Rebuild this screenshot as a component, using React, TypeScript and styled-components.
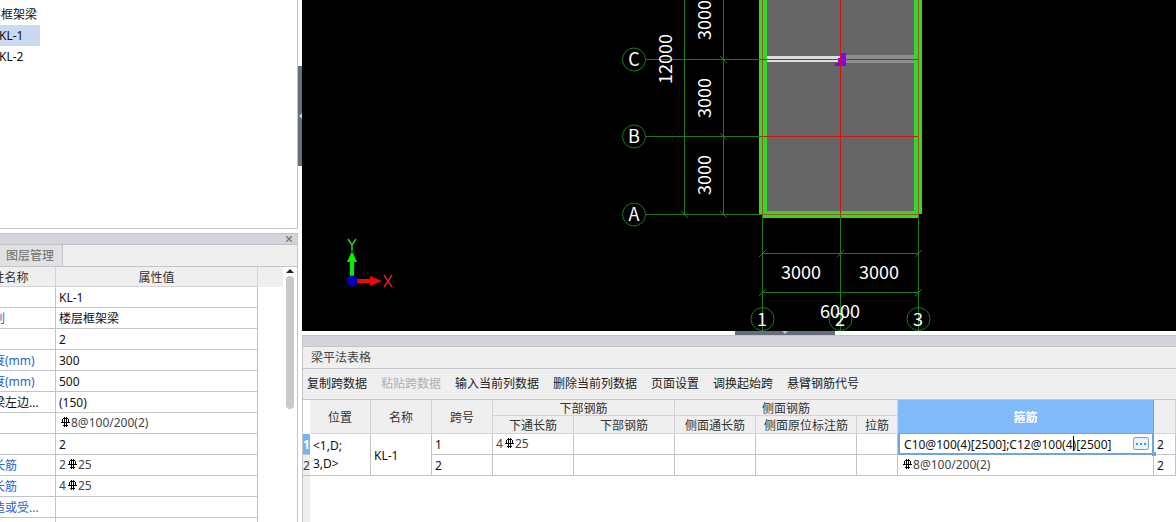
import React from "react";
import styled, { createGlobalStyle } from "styled-components";

const line = "#c3c4c8";

const GlobalStyle = createGlobalStyle`
  *, *::before, *::after { box-sizing: border-box; }
  body {
    margin: 0;
    background: #fff;
    color: #111;
    font: 12px/20px "Noto Sans", "Noto Sans CJK SC", sans-serif;
    overflow: hidden;
  }
  button, input { font: inherit; color: inherit; }
`;

const Page = styled.div`
  display: flex;
  height: 100vh;
  overflow: hidden;
`;

const Sidebar = styled.aside`
  flex: none;
  width: 298px;
  display: flex;
  flex-direction: column;
  gap: 4px;
`;

const TreePanel = styled.section`
  flex: none;
  height: 229px;
  padding-top: 4px;
  border: solid ${line};
  border-width: 0 1px 1px 0;
  overflow: hidden;
`;

const TreeList = styled.ul`
  list-style: none;
  margin: 0 0 0 -12px;
  padding: 0;
  display: flex;
  flex-direction: column;
  align-items: flex-start;
`;

const TreeItem = styled.li<{ $selected?: boolean }>`
  height: 21px;
  line-height: 21px;
  padding-left: ${(p) => (p.$selected === undefined ? 1 : 11)}px;
  padding-right: ${(p) => (p.$selected === undefined ? 0 : 17)}px;
  background: ${(p) => (p.$selected ? "#c9daf0" : "none")};
`;

const PropertyPanel = styled.section`
  flex: 1;
  min-height: 0;
  display: flex;
  flex-direction: column;
  border: solid ${line};
  border-width: 1px 1px 0 0;
  overflow: hidden;
`;

const TitleBar = styled.div`
  flex: none;
  height: 11px;
  display: flex;
  justify-content: flex-end;
  align-items: center;
  padding-right: 5px;
  background: #d4d5da;
  border-bottom: 1px solid ${line};
`;

const CloseButton = styled.button`
  display: flex;
  padding: 0;
  border: 0;
  background: none;
`;

const TabStrip = styled.div`
  flex: none;
  height: 22px;
  display: flex;
  background: #efefef;
  border-bottom: 1px solid ${line};
`;

const Tab = styled.button`
  padding: 1px 8px 0 6px;
  border: 0;
  border-right: 1px solid ${line};
  background: #e1e1e2;
  color: #6c6c6c;
  line-height: 20px;
`;

const PropertyBody = styled.div`
  flex: 1;
  min-height: 0;
  display: flex;
  overflow: hidden;
`;

const PropertyScroller = styled.div`
  flex: 1;
  min-width: 0;
  overflow: hidden;
`;

const PropertyTable = styled.table`
  width: calc(100% + 46px);
  margin-left: -46px;
  table-layout: fixed;
  border-collapse: separate;
  border-spacing: 0;

  th, td {
    height: 21px;
    padding: 2px 3px 0;
    line-height: 18px;
    font-weight: normal;
    text-align: left;
    white-space: nowrap;
    border: solid ${line};
    border-width: 0 1px 1px 0;
  }
  thead th {
    height: 20px;
    line-height: 17px;
    text-align: center;
    color: #333;
    background: #efefef;
    border-color: #d2d3d5;
  }
  th:last-child, td:last-child { border: 0; }
`;

const PropertyName = styled.th<{ $link?: boolean }>`
  color: ${(p) => (p.$link ? "#2b5fd0" : "#111")};
`;

const ScrollTrack = styled.div`
  flex: none;
  width: 14px;
  display: flex;
  flex-direction: column;
  align-items: center;
  gap: 3px;
  padding-top: 2px;
`;

const ScrollThumb = styled.div`
  width: 8px;
  height: 133px;
  border-radius: 4px;
  background: #c9c9c9;
`;

const VerticalSplitter = styled.div`
  flex: none;
  width: 4px;
  padding-top: 66px;
`;

const HorizontalSplitter = styled.div`
  flex: none;
  height: 4px;
  display: flex;
  justify-content: center;
  padding-left: 92px;
`;

const Grip = styled.button<{ $vertical?: boolean }>`
  width: ${(p) => (p.$vertical ? 4 : 100)}px;
  height: ${(p) => (p.$vertical ? 100 : 4)}px;
  display: flex;
  align-items: center;
  justify-content: center;
  padding: 0;
  border: 0;
  background: #656e79;
`;

const Main = styled.main`
  flex: 1;
  min-width: 0;
  display: flex;
  flex-direction: column;
`;

const Canvas = styled.div`
  flex: none;
  background: #000;
  overflow: hidden;

  svg { display: block; }
`;

const SheetPanel = styled.section`
  flex: 1;
  min-height: 0;
  display: flex;
  flex-direction: column;
  border: solid ${line};
  border-width: 1px 0 0 1px;
`;

const SheetTitle = styled.h2`
  flex: none;
  height: 22px;
  margin: 0;
  padding: 1px 0 0 8px;
  font-size: 12px;
  line-height: 20px;
  font-weight: normal;
  color: #444;
  background: #efefef;
  border-bottom: 1px solid ${line};
`;

const Toolbar = styled.div`
  flex: none;
  height: 31px;
  display: flex;
  gap: 14px;
  padding-left: 4px;
  background: #efefef;
  border-bottom: 1px solid ${line};
`;

const ToolButton = styled.button`
  padding: 0;
  border: 0;
  background: none;
  color: #222;
  line-height: 30px;
  white-space: nowrap;

  &:disabled { color: #b0b0b0; }
`;

const SheetArea = styled.div`
  flex: 1;
  min-height: 0;
  background: linear-gradient(to right, #efefef 7px, #fff 7px);
`;

const SheetTable = styled.table`
  width: 100%;
  table-layout: fixed;
  border-collapse: separate;
  border-spacing: 0;

  th, td {
    padding: 2px 3px 0;
    font-weight: normal;
    text-align: left;
    white-space: nowrap;
    border: solid ${line};
    border-width: 0 1px 1px 0;
  }
  td { height: 21px; line-height: 18px; background: #fff; }
`;

const HeadCell = styled.th<{ $active?: boolean }>`
  && {
    height: 16px;
    padding: 2px 0 0;
    line-height: 13px;
    text-align: center;
    color: ${(p) => (p.$active ? "#fff" : "#333")};
    font-weight: ${(p) => (p.$active ? "bold" : "normal")};
    background: ${(p) => (p.$active ? "#80bafb" : "#efefef")};
    border-color: ${(p) => (p.$active ? "#6fa5dc" : "#d2d3d5")};
  }
`;

const SubHeadRow = styled.tr`
  && th { height: 18px; line-height: 15px; }
`;

const CornerCell = styled.td`
  && { padding: 0; border: 0; }
`;

const RowNumber = styled.th<{ $active?: boolean }>`
  && {
    padding: 2px 0 0;
    overflow: hidden;
    line-height: 18px;
    color: ${(p) => (p.$active ? "#fff" : "#333")};
    font-weight: ${(p) => (p.$active ? "bold" : "normal")};
    background: ${(p) => (p.$active ? "#77b2f3" : "#efefef")};
    border-right: 0;
  }
`;

const LocationCell = styled.td`
  && { padding-top: 1px; white-space: pre; }
`;

const EditCell = styled.td`
  && {
    position: relative;
    padding: 0;
    border: 2px solid #6fa5dc;
    border-top: 0;
  }
`;

const EditBox = styled.div`
  display: flex;
  align-items: center;
  gap: 4px;
  height: 19px;
  padding: 0 3px 0 4px;
`;

const EditInput = styled.input`
  flex: 1;
  min-width: 0;
  height: 19px;
  padding: 1px 0 0;
  border: 0;
  outline: 0;
  background: none;
`;

const MoreButton = styled.button`
  flex: none;
  width: 16px;
  height: 13px;
  display: flex;
  align-items: center;
  justify-content: center;
  padding: 0;
  border: 1px solid #6fa5dc;
  border-radius: 2px;
  background: #eaf3fc;
`;

const Caret = styled.span`
  position: absolute;
  left: 173px;
  top: 2px;
  width: 1px;
  height: 15px;
  background: #000;
`;

const FillHandle = styled.span`
  position: absolute;
  right: -4px;
  bottom: -3px;
  z-index: 1;
  width: 4px;
  height: 4px;
  background: #6fa5dc;
`;

const RebarValue = styled.span`
  display: flex;
  align-items: center;
  height: 18px;
  line-height: 18px;
  padding-bottom: 2px;
  color: #444;

  svg { flex: none; margin: 0 1px 0 2px; }
`;

/* Hot-rolled ribbed bar symbol drawn before the bar diameter */
const RebarMark = () => (
  <svg width="9" height="14" viewBox="0 0 9 14" fill="none" stroke="#000" shapeRendering="crispEdges">
    <path d="M3.5 1v10M5.5 1v10M2 2.5h5M1.5 3v4M7.5 3v4M0 6.5h9M2 9.5h5" />
  </svg>
);

const Rebar = ({ count, size }: { count?: string; size: string }) => (
  <RebarValue>
    {count}
    <RebarMark />
    {size}
  </RebarValue>
);

type Property = { name: string; link?: boolean; value: React.ReactNode };

const properties: Property[] = [
  { name: "名称", value: "KL-1" },
  { name: "结构类别", link: true, value: "楼层框架梁" },
  { name: "跨数量", value: "2" },
  { name: "截面宽度(mm)", link: true, value: "300" },
  { name: "截面高度(mm)", link: true, value: "500" },
  { name: "轴线距梁左边...", value: "(150)" },
  { name: "箍筋", value: <Rebar size="8@100/200(2)" /> },
  { name: "肢数", value: "2" },
  { name: "上部通长筋", link: true, value: <Rebar count="2" size="25" /> },
  { name: "下部通长筋", link: true, value: <Rebar count="4" size="25" /> },
  { name: "侧面构造或受...", link: true, value: "" },
  { name: "拉筋", value: "" },
];

const tools = [
  { label: "复制跨数据" },
  { label: "粘贴跨数据", disabled: true },
  { label: "输入当前列数据" },
  { label: "删除当前列数据" },
  { label: "页面设置" },
  { label: "调换起始跨" },
  { label: "悬臂钢筋代号" },
];

const axisRows = [
  { label: "C", y: 59 },
  { label: "B", y: 136 },
  { label: "A", y: 214 },
];

const axisColumns = [
  { label: "1", x: 460 },
  { label: "2", x: 538 },
  { label: "3", x: 616 },
];

const Drawing = () => (
  <svg width="874" height="331" viewBox="0 0 874 331" fontFamily='"Noto Sans CJK SC", sans-serif'>
    <rect x="465" width="147" height="211" fill="#666" />
    <g fill="#36d632">
      <rect x="457" width="8" height="214" />
      <rect x="612" width="8" height="214" />
      <rect x="460" y="211" width="156" height="7" />
    </g>
    <rect x="465" y="56" width="74" height="6" fill="#ddd" />
    <rect x="544" y="55" width="68" height="8" fill="#8e8e8e" />
    <path d="M539 53h5v13h-11v-3h3v-5h3z" fill="#8a00f0" />
    <g stroke="#cf1414" fill="none" shapeRendering="crispEdges">
      <path d="M460 59.5h157M460 136.5h157M538.5 0v214" />
      <path d="M460.5 0v214M616.5 0v214M460 214.5h157" stroke="#94600f" />
    </g>
    <g stroke="#1c7a1c" fill="none">
      <path
        shapeRendering="crispEdges"
        d="M382.5 0v214M421.5 0v214M344 59.5h116M344 136.5h116M344 214.5h116M460.5 215v116M538.5 215v116M616.5 215v116M460 253.5h156M460 292.5h156"
      />
      <path d="M418 56l7 7M418 133l7 7M418 211l7 7M379 211l7 7M457 257l7-7M535 257l7-7M613 257l7-7M457 296l7-7M613 296l7-7" />
      {axisRows.map((a) => (
        <circle key={a.label} cx="332" cy={a.y + 0.5} r="11.5" />
      ))}
      {axisColumns.map((a) => (
        <circle key={a.label} cx={a.x + 0.5} cy="319" r="11.5" />
      ))}
    </g>
    <g fill="#fff" fontSize="18" textAnchor="middle">
      {axisRows.map((a) => (
        <text key={a.label} x="332" y={a.y + 7}>{a.label}</text>
      ))}
      {axisColumns.map((a) => (
        <text key={a.label} x={a.x} y="326">{a.label}</text>
      ))}
      <text x="499" y="279">3000</text>
      <text x="577" y="279">3000</text>
      <text x="538" y="318">6000</text>
      <text transform="translate(409 20) rotate(-90)">3000</text>
      <text transform="translate(409 98) rotate(-90)">3000</text>
      <text transform="translate(409 175) rotate(-90)">3000</text>
      <text transform="translate(370 59) rotate(-90)">12000</text>
    </g>
    <path d="M48 278v-16h-3l5-11 5 11h-3v16z" fill="#00f000" />
    <path d="M55 279h13v-3l12 5-12 5v-3h-13z" fill="#f00808" />
    <circle cx="50" cy="281" r="5.5" fill="#0000b8" />
    <path d="M46 239l4 6 4-6M50 245v6" stroke="#35d035" strokeWidth="1.4" fill="none" />
    <path d="M82 275l8 12M90 275l-8 12" stroke="#e02020" strokeWidth="1.4" fill="none" />
  </svg>
);

export default function App() {
  return (
    <Page>
      <GlobalStyle />
      <Sidebar>
        <TreePanel>
          <TreeList>
            <TreeItem>层框架梁</TreeItem>
            <TreeItem $selected>KL-1</TreeItem>
            <TreeItem $selected={false}>KL-2</TreeItem>
          </TreeList>
        </TreePanel>
        <PropertyPanel>
          <TitleBar>
            <CloseButton aria-label="关闭">
              <svg width="6" height="6" viewBox="0 0 6 6" stroke="#777" strokeWidth="1.3">
                <path d="M0 0l6 6M6 0l-6 6" />
              </svg>
            </CloseButton>
          </TitleBar>
          <TabStrip>
            <Tab>图层管理</Tab>
          </TabStrip>
          <PropertyBody>
            <PropertyScroller>
              <PropertyTable>
                <colgroup>
                  <col style={{ width: 102 }} />
                  <col style={{ width: 202 }} />
                  <col />
                </colgroup>
                <thead>
                  <tr>
                    <th>属性名称</th>
                    <th>属性值</th>
                    <th />
                  </tr>
                </thead>
                <tbody>
                  {properties.map((p) => (
                    <tr key={p.name}>
                      <PropertyName scope="row" $link={p.link}>{p.name}</PropertyName>
                      <td>{p.value}</td>
                      <td />
                    </tr>
                  ))}
                </tbody>
              </PropertyTable>
            </PropertyScroller>
            <ScrollTrack>
              <svg width="10" height="4" viewBox="0 0 10 4">
                <path d="M1 4l4-4 4 4z" fill="#222" />
              </svg>
              <ScrollThumb />
            </ScrollTrack>
          </PropertyBody>
        </PropertyPanel>
      </Sidebar>
      <VerticalSplitter>
        <Grip $vertical aria-label="折叠左侧面板">
          <svg width="4" height="6" viewBox="0 0 4 6">
            <path d="M4 0v6l-3-3z" fill="#c4c8cc" />
          </svg>
        </Grip>
      </VerticalSplitter>
      <Main>
        <Canvas>
          <Drawing />
        </Canvas>
        <HorizontalSplitter>
          <Grip aria-label="折叠下方面板">
            <svg width="6" height="4" viewBox="0 0 6 4">
              <path d="M0 0h6l-3 3z" fill="#c4c8cc" />
            </svg>
          </Grip>
        </HorizontalSplitter>
        <SheetPanel>
          <TitleBar />
          <SheetTitle>梁平法表格</SheetTitle>
          <Toolbar>
            {tools.map((t) => (
              <ToolButton key={t.label} disabled={t.disabled}>{t.label}</ToolButton>
            ))}
          </Toolbar>
          <SheetArea>
            <SheetTable>
              <colgroup>
                {[7, 61, 61, 61, 81, 101, 81, 101, 41, 256].map((w, i) => (
                  <col key={i} style={{ width: w }} />
                ))}
                <col />
              </colgroup>
              <thead>
                <tr>
                  <CornerCell rowSpan={2} />
                  <HeadCell rowSpan={2}>位置</HeadCell>
                  <HeadCell rowSpan={2}>名称</HeadCell>
                  <HeadCell rowSpan={2}>跨号</HeadCell>
                  <HeadCell colSpan={2}>下部钢筋</HeadCell>
                  <HeadCell colSpan={3}>侧面钢筋</HeadCell>
                  <HeadCell rowSpan={2} $active>箍筋</HeadCell>
                  <HeadCell rowSpan={2} />
                </tr>
                <SubHeadRow>
                  <HeadCell>下通长筋</HeadCell>
                  <HeadCell>下部钢筋</HeadCell>
                  <HeadCell>侧面通长筋</HeadCell>
                  <HeadCell>侧面原位标注筋</HeadCell>
                  <HeadCell>拉筋</HeadCell>
                </SubHeadRow>
              </thead>
              <tbody>
                <tr>
                  <RowNumber $active scope="row">1</RowNumber>
                  <LocationCell rowSpan={2}>{"<1,D;\n3,D>"}</LocationCell>
                  <td rowSpan={2}>KL-1</td>
                  <td>1</td>
                  <td><Rebar count="4" size="25" /></td>
                  <td />
                  <td />
                  <td />
                  <td />
                  <EditCell>
                    <EditBox>
                      <EditInput aria-label="箍筋" defaultValue="C10@100(4)[2500];C12@100(4)[2500]" />
                      <MoreButton aria-label="更多">
                        <svg width="10" height="2" viewBox="0 0 10 2" fill="#4a90d9">
                          <path d="M0 0h2v2h-2zM4 0h2v2h-2zM8 0h2v2h-2z" />
                        </svg>
                      </MoreButton>
                    </EditBox>
                    <Caret />
                    <FillHandle />
                  </EditCell>
                  <td>2</td>
                </tr>
                <tr>
                  <RowNumber scope="row">2</RowNumber>
                  <td>2</td>
                  <td />
                  <td />
                  <td />
                  <td />
                  <td />
                  <td><Rebar size="8@100/200(2)" /></td>
                  <td>2</td>
                </tr>
              </tbody>
            </SheetTable>
          </SheetArea>
        </SheetPanel>
      </Main>
    </Page>
  );
}
